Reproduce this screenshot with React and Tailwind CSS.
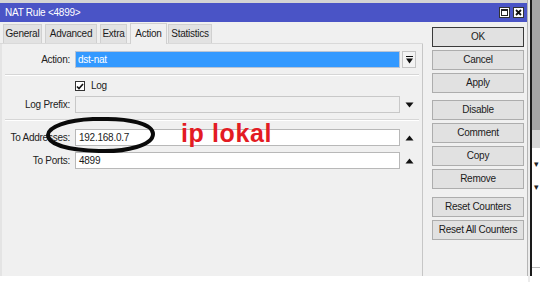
const tabs = [
  { label: 'General', cls: 'w-[39px] ml-[3px]' },
  { label: 'Advanced', cls: 'w-[52px] ml-[3px]' },
  { label: 'Extra', cls: 'w-[27px] ml-[3px]' },
  { label: 'Action', cls: 'w-[37px] ml-[3px]', active: true },
  { label: 'Statistics', cls: 'w-[44px] ml-[1px]' },
]

const groups = [
  { cls: 'mt-[5px]', items: ['OK', 'Cancel', 'Apply'] },
  { cls: 'mt-[7px]', items: ['Disable', 'Comment', 'Copy', 'Remove'] },
  { cls: 'mt-[8px]', items: ['Reset Counters', 'Reset All Counters'] },
]

function Up() {
  return (
    <svg width="9" height="6" viewBox="0 0 9 6"><path d="M0.5 5.5 L4.5 0.5 L8.5 5.5 Z" fill="#111" /></svg>
  )
}

function Down() {
  return (
    <svg width="9" height="6" viewBox="0 0 9 6"><path d="M0.5 0.5 L4.5 5.5 L8.5 0.5 Z" fill="#111" /></svg>
  )
}

function Row({ label, children, right, cls }) {
  return (
    <div className={`flex h-[17px] items-center ${cls}`}>
      <div className="w-[68px] text-right text-[#222]">{label}</div>
      <div className="ml-[5px] w-[325px] h-full">{children}</div>
      <div className="ml-[2px] flex w-[14px] h-full items-center justify-center">{right}</div>
    </div>
  )
}

export default function App() {
  return (
    <div className="relative flex h-[282px] w-[540px] overflow-hidden whitespace-nowrap bg-white text-[10px] leading-none tracking-[-0.25px] text-[#1b1b1b] font-['Liberation_Sans',sans-serif]">
      {/* window */}
      <div className="flex h-[276px] w-[528px] flex-col border-r border-[#b4b4b4]">
        <div className="flex h-[22px] items-center border-t-[3px] border-[#d4d4d4] bg-[#4a54c6] pl-[5px] pr-[3px] text-white">
          <span>NAT Rule &lt;4899&gt;</span>
          <div className="ml-auto flex gap-[3px]">
            <div className="flex h-[11px] w-[11px] items-center justify-center border border-[#333] bg-white">
              <div className="h-[7px] w-[7px] border border-[#222] border-t-2" />
            </div>
            <div className="flex h-[11px] w-[11px] items-center justify-center border border-[#333] bg-white">
              <svg width="7" height="7" viewBox="0 0 7 7"><path d="M1 1 L6 6 M6 1 L1 6" stroke="#111" strokeWidth="1.8" /></svg>
            </div>
          </div>
        </div>

        <div className="flex flex-1 bg-[#f0f0f0]">
          {/* left: tabs + panel */}
          <div className="flex w-[423px] flex-col">
            <div className="flex h-[22px] items-end border-b border-[#d9d9d9]">
              {tabs.map((t) => (
                <div
                  key={t.label}
                  className={`${t.cls} flex items-center justify-center border border-b-0 border-[#d0d0d0] ${t.active ? 'h-[21px] bg-[#f0f0f0] -mb-px' : 'h-[19px] bg-[#e2e2e2]'}`}
                >
                  {t.label}
                </div>
              ))}
            </div>

            <div className="flex flex-1 flex-col border-l-2 border-r border-l-[#e4e4e4] border-r-[#c6c6c6] pt-[7px]">
              <Row
                label="Action:"
                right={
                  <div className="flex h-full w-full items-center justify-center border border-[#c4c4c4] bg-[#f3f3f3]">
                    <svg width="7" height="8" viewBox="0 0 7 8"><path d="M0 0.5 H7" stroke="#111" /><path d="M0 2.5 L3.5 7.5 L7 2.5 Z" fill="#111" /></svg>
                  </div>
                }
              >
                <div className="flex h-full items-center border border-[#b9c4d4] bg-[#3399ff] pl-[2px] text-white">dst-nat</div>
              </Row>

              <div className="mx-[3px] mt-[6px] border-t border-b border-t-[#d6d6d6] border-b-white" />

              <div className="mt-[4px] flex h-[12px] items-center pl-[73px]">
                <div className="flex h-[10px] w-[10px] items-center justify-center border border-[#333] bg-white">
                  <svg width="8" height="7" viewBox="0 0 8 7"><path d="M1 3.5 L3 5.5 L7 1" stroke="#111" strokeWidth="1.6" fill="none" /></svg>
                </div>
                <span className="ml-[6px]">Log</span>
              </div>

              <Row label="Log Prefix:" cls="mt-[4px]" right={<Down />}>
                <div className="h-full border border-[#c8c8c8] bg-[#f0f0f0]" />
              </Row>

              <div className="mx-[3px] mt-[6px] border-t border-b border-t-[#d6d6d6] border-b-white" />

              <Row label="To Addresses:" cls="mt-[8px]" right={<Up />}>
                <div className="flex h-full items-center border border-[#b8b8b8] bg-white pl-[3px]">192.168.0.7</div>
              </Row>

              <Row label="To Ports:" cls="mt-[6px]" right={<Up />}>
                <div className="flex h-full items-center border border-[#b8b8b8] bg-white pl-[3px]">4899</div>
              </Row>
            </div>
          </div>

          {/* right: buttons */}
          <div className="flex flex-1 flex-col pl-[9px]">
            {groups.map((g, gi) => (
              <div key={gi} className={`flex flex-col gap-[3px] ${g.cls}`}>
                {g.items.map((b) => (
                  <div
                    key={b}
                    className={`flex h-[20px] w-[92px] items-center justify-center bg-[#e1e1e1] ${b === 'OK' ? 'border border-[#3a3a3a]' : 'border border-[#adadad]'}`}
                  >
                    {b}
                  </div>
                ))}
              </div>
            ))}
          </div>
        </div>
      </div>

      {/* window behind, right edge */}
      <div className="flex flex-1">
        <div className="w-[2px] bg-[#ececec]" />
        <div className="h-[276px] w-[2px] bg-[#1a1a1a]" />
        <div className="flex flex-1 flex-col">
          <div className="h-[130px] bg-[#a4a4a4]" />
          <div className="h-[18px] bg-[#d6d6d6]" />
          <div className="flex flex-col pl-[2px] pt-[12px] text-[9px] text-[#222]">
            <span className="h-[23px]">▾</span>
            <span>▾</span>
          </div>
          <div className="mt-[75px] border-t border-[#bdbdbd]" />
        </div>
      </div>

      {/* hand-drawn annotation */}
      <svg className="pointer-events-none absolute left-[43px] top-[114px]" width="116" height="42" viewBox="0 0 116 42">
        <path
          d="M58 5 C86 4 110 10 110 20 C110 31 84 38 56 37 C27 36 5 31 5 21 C5 13 24 6 50 5 C54 5 58 5 62 5"
          fill="none"
          stroke="#0a0a0a"
          strokeWidth="4"
          strokeLinecap="round"
        />
      </svg>
      <div className="absolute left-[181px] top-[121px] text-[25px] font-bold leading-none tracking-[0.6px] text-[#e31b23]">
        ip lokal
      </div>
    </div>
  )
}
